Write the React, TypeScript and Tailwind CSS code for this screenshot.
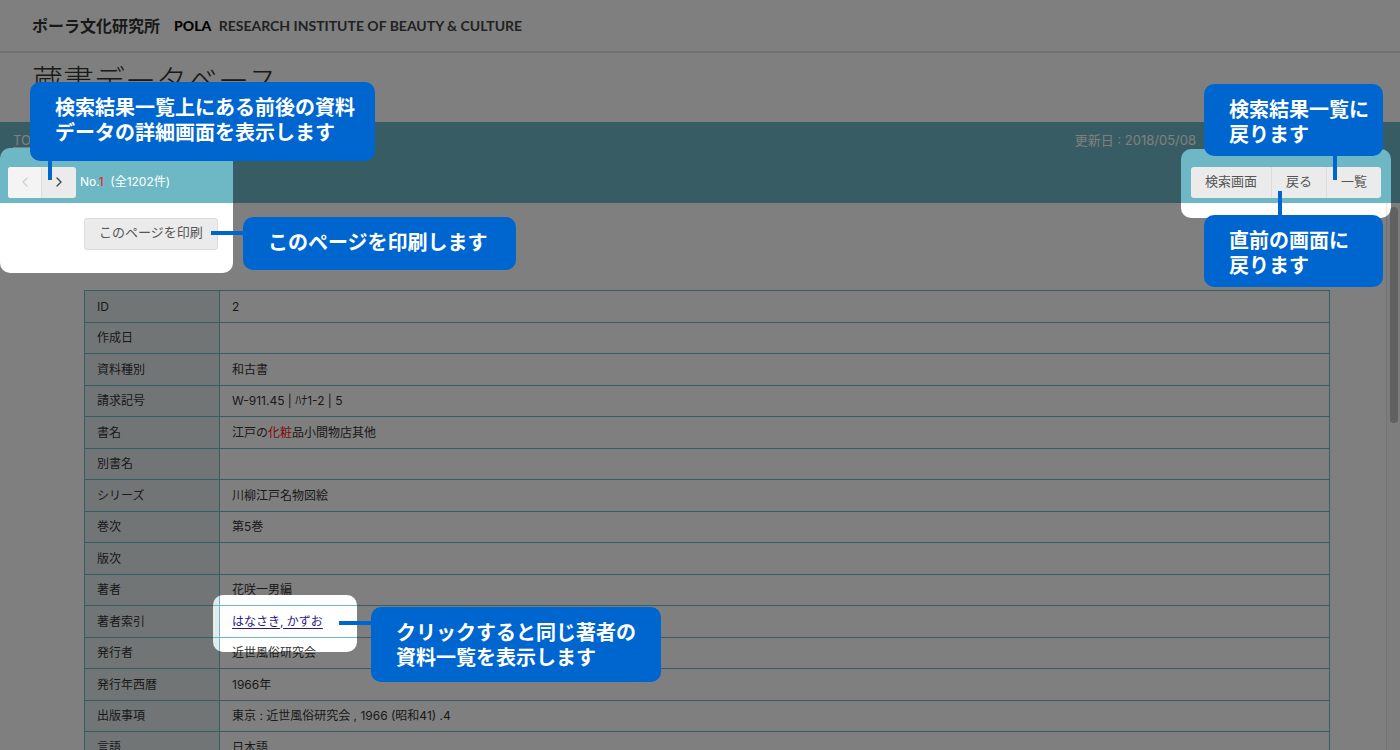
import type { ReactNode } from "react";
import { ChevronLeft, ChevronRight } from "lucide-react";
import { clsx } from "clsx";

type Row = { label: string; value?: ReactNode };

const ROWS: Row[] = [
  { label: "ID", value: "2" },
  { label: "作成日" },
  { label: "資料種別", value: "和古書" },
  { label: "請求記号", value: "W-911.45 | ﾊﾅ1-2 | 5" },
  {
    label: "書名",
    value: (
      <>
        江戸の<em className="text-[#ff1010] not-italic">化粧</em>品小間物店其他
      </>
    ),
  },
  { label: "別書名" },
  { label: "シリーズ", value: "川柳江戸名物図絵" },
  { label: "巻次", value: "第5巻" },
  { label: "版次" },
  { label: "著者", value: "花咲一男編" },
  {
    label: "著者索引",
    value: (
      <a href="#author" className="text-[#2a1a80] underline underline-offset-2">
        はなさき, かずお
      </a>
    ),
  },
  { label: "発行者", value: "近世風俗研究会" },
  { label: "発行年西暦", value: "1966年" },
  { label: "出版事項", value: "東京 : 近世風俗研究会 , 1966 (昭和41) .4" },
  { label: "言語", value: "日本語" },
];

const NAV_BUTTONS = ["検索画面", "戻る", "一覧"];

function Header() {
  return (
    <header className="flex h-[53px] shrink-0 items-center gap-[14px] border-b-2 border-[#e4e4e4] pl-8">
      <span className="text-base font-bold text-[#333]">ポーラ文化研究所</span>
      <span className="font-['Lato','Noto_Sans_CJK_JP',sans-serif] text-sm font-bold text-[#444]">
        <b className="mr-1 font-black text-black">POLA</b> RESEARCH INSTITUTE OF BEAUTY &amp; CULTURE
      </span>
    </header>
  );
}

function Toolbar() {
  return (
    <div className="flex h-[81px] shrink-0 flex-col justify-between bg-[#6eb8c6] pb-[5px] text-white">
      <div className="flex justify-between pt-2 pr-[204px] pl-[13px] text-[13px] leading-5">
        <a href="#top" className="underline underline-offset-2">
          TOP
        </a>
        <span>更新日 : 2018/05/08</span>
      </div>
      <div className="flex items-center justify-between pr-[19px] pl-2">
        <div className="flex items-center gap-1">
          <div className="flex h-[31px] divide-x divide-[#dcdcdc] overflow-hidden rounded-[3px] bg-[#ebebeb] text-[#444]">
            <button
              type="button"
              disabled
              aria-label="前へ"
              className="flex w-[34px] items-center justify-center bg-[#f4f4f4] pb-0.5 text-[#d0d0d0]"
            >
              <ChevronLeft className="size-4" />
            </button>
            <button type="button" aria-label="次へ" className="flex w-[34px] items-center justify-center pb-0.5">
              <ChevronRight className="size-4" />
            </button>
          </div>
          <p className="pb-0.5 text-xs whitespace-pre">
            No.<span className="text-[#ff1010]">1</span>  (全1202件)
          </p>
        </div>
        <div className="flex h-[31px] divide-x divide-[#dcdcdc] overflow-hidden rounded-[3px] bg-[#ebebeb]">
          {NAV_BUTTONS.map((label) => (
            <button key={label} type="button" className="px-[14px] pb-0.5 text-[13px] text-[#555]">
              {label}
            </button>
          ))}
        </div>
      </div>
    </div>
  );
}

function DetailTable() {
  return (
    <table className="w-full border-collapse text-left text-xs text-[#333]">
      <tbody>
        {ROWS.map((row) => (
          <tr key={row.label} className="odd:h-8 even:h-[31px]">
            <th
              scope="row"
              className="w-[135px] border border-[#6dbcc4] bg-[#e5eaed] px-3 font-normal"
            >
              {row.label}
            </th>
            <td className="border border-[#6dbcc4] px-3">{row.value}</td>
          </tr>
        ))}
      </tbody>
    </table>
  );
}

/* Dark layer with rounded windows over the parts being explained */
function Spotlight() {
  return (
    <svg className="pointer-events-none absolute inset-0 size-full" aria-hidden="true">
      <mask id="spots">
        <rect width="100%" height="100%" fill="#fff" />
        <rect x="0" y="148" width="233" height="125" rx="10" />
        <rect x="213" y="595" width="144" height="57" rx="10" />
        <svg x="100%" overflow="visible">
          <rect x="-219" y="149" width="210" height="69" rx="10" />
        </svg>
      </mask>
      <rect width="100%" height="100%" fill="#000" fillOpacity="0.5" mask="url(#spots)" />
    </svg>
  );
}

type CalloutProps = { className: string; line: string; children: ReactNode };

function Callout({ className, line, children }: CalloutProps) {
  return (
    <div
      className={clsx(
        "absolute rounded-[10px] bg-[#0066cf] pt-3.5 pl-[25px] text-xl leading-[25px] font-bold whitespace-nowrap text-white",
        className
      )}
    >
      {children}
      <span className={clsx("absolute bg-[#0066cf]", line)} />
    </div>
  );
}

export default function App() {
  return (
    <div className="relative flex h-screen flex-col overflow-hidden bg-white font-['Inter','Noto_Sans_CJK_JP',sans-serif]">
      <Header />
      <h1 className="h-[69px] shrink-0 pt-2.5 pl-8 text-[31px] leading-9 font-light text-[#333]">
        蔵書データベース
      </h1>
      <Toolbar />

      <div className="flex min-h-0 flex-1">
        <main className="min-w-0 flex-1 overflow-hidden pt-[15px] pr-14 pl-[84px]">
          <button
            type="button"
            className="mb-10 block h-8 rounded-[3px] border border-[#dcdcdc] bg-[#ebebeb] px-[14px] pb-0.5 text-[13px] text-[#555]"
          >
            このページを印刷
          </button>
          <DetailTable />
        </main>
        {/* Scrollbar */}
        <div className="w-[14px] border-l border-[#e8e8e8] bg-[#fafafa] pt-1 pl-[3px]">
          <div className="h-[216px] w-2 rounded-full bg-[#c1c1c1]" />
        </div>
      </div>

      <Spotlight />

      <Callout className="top-[82px] left-[30px] h-[79px] w-[345px]" line="top-full left-[18px] h-[19px] w-1">
        検索結果一覧上にある前後の資料
        <br />
        データの詳細画面を表示します
      </Callout>
      <Callout className="top-[217px] left-[243px] h-[53px] w-[273px]" line="top-[14px] right-full h-1 w-8">
        このページを印刷します
      </Callout>
      <Callout className="top-[84px] right-[17px] h-[72px] w-[179px]" line="top-full right-[46px] h-6 w-1">
        検索結果一覧に
        <br />
        戻ります
      </Callout>
      <Callout className="top-[215px] right-[17px] h-[72px] w-[179px]" line="right-[101px] bottom-full h-6 w-1">
        直前の画面に
        <br />
        戻ります
      </Callout>
      <Callout className="top-[607px] left-[371px] h-[75px] w-[290px]" line="top-[14px] right-full h-1 w-8">
        クリックすると同じ著者の
        <br />
        資料一覧を表示します
      </Callout>
    </div>
  );
}
